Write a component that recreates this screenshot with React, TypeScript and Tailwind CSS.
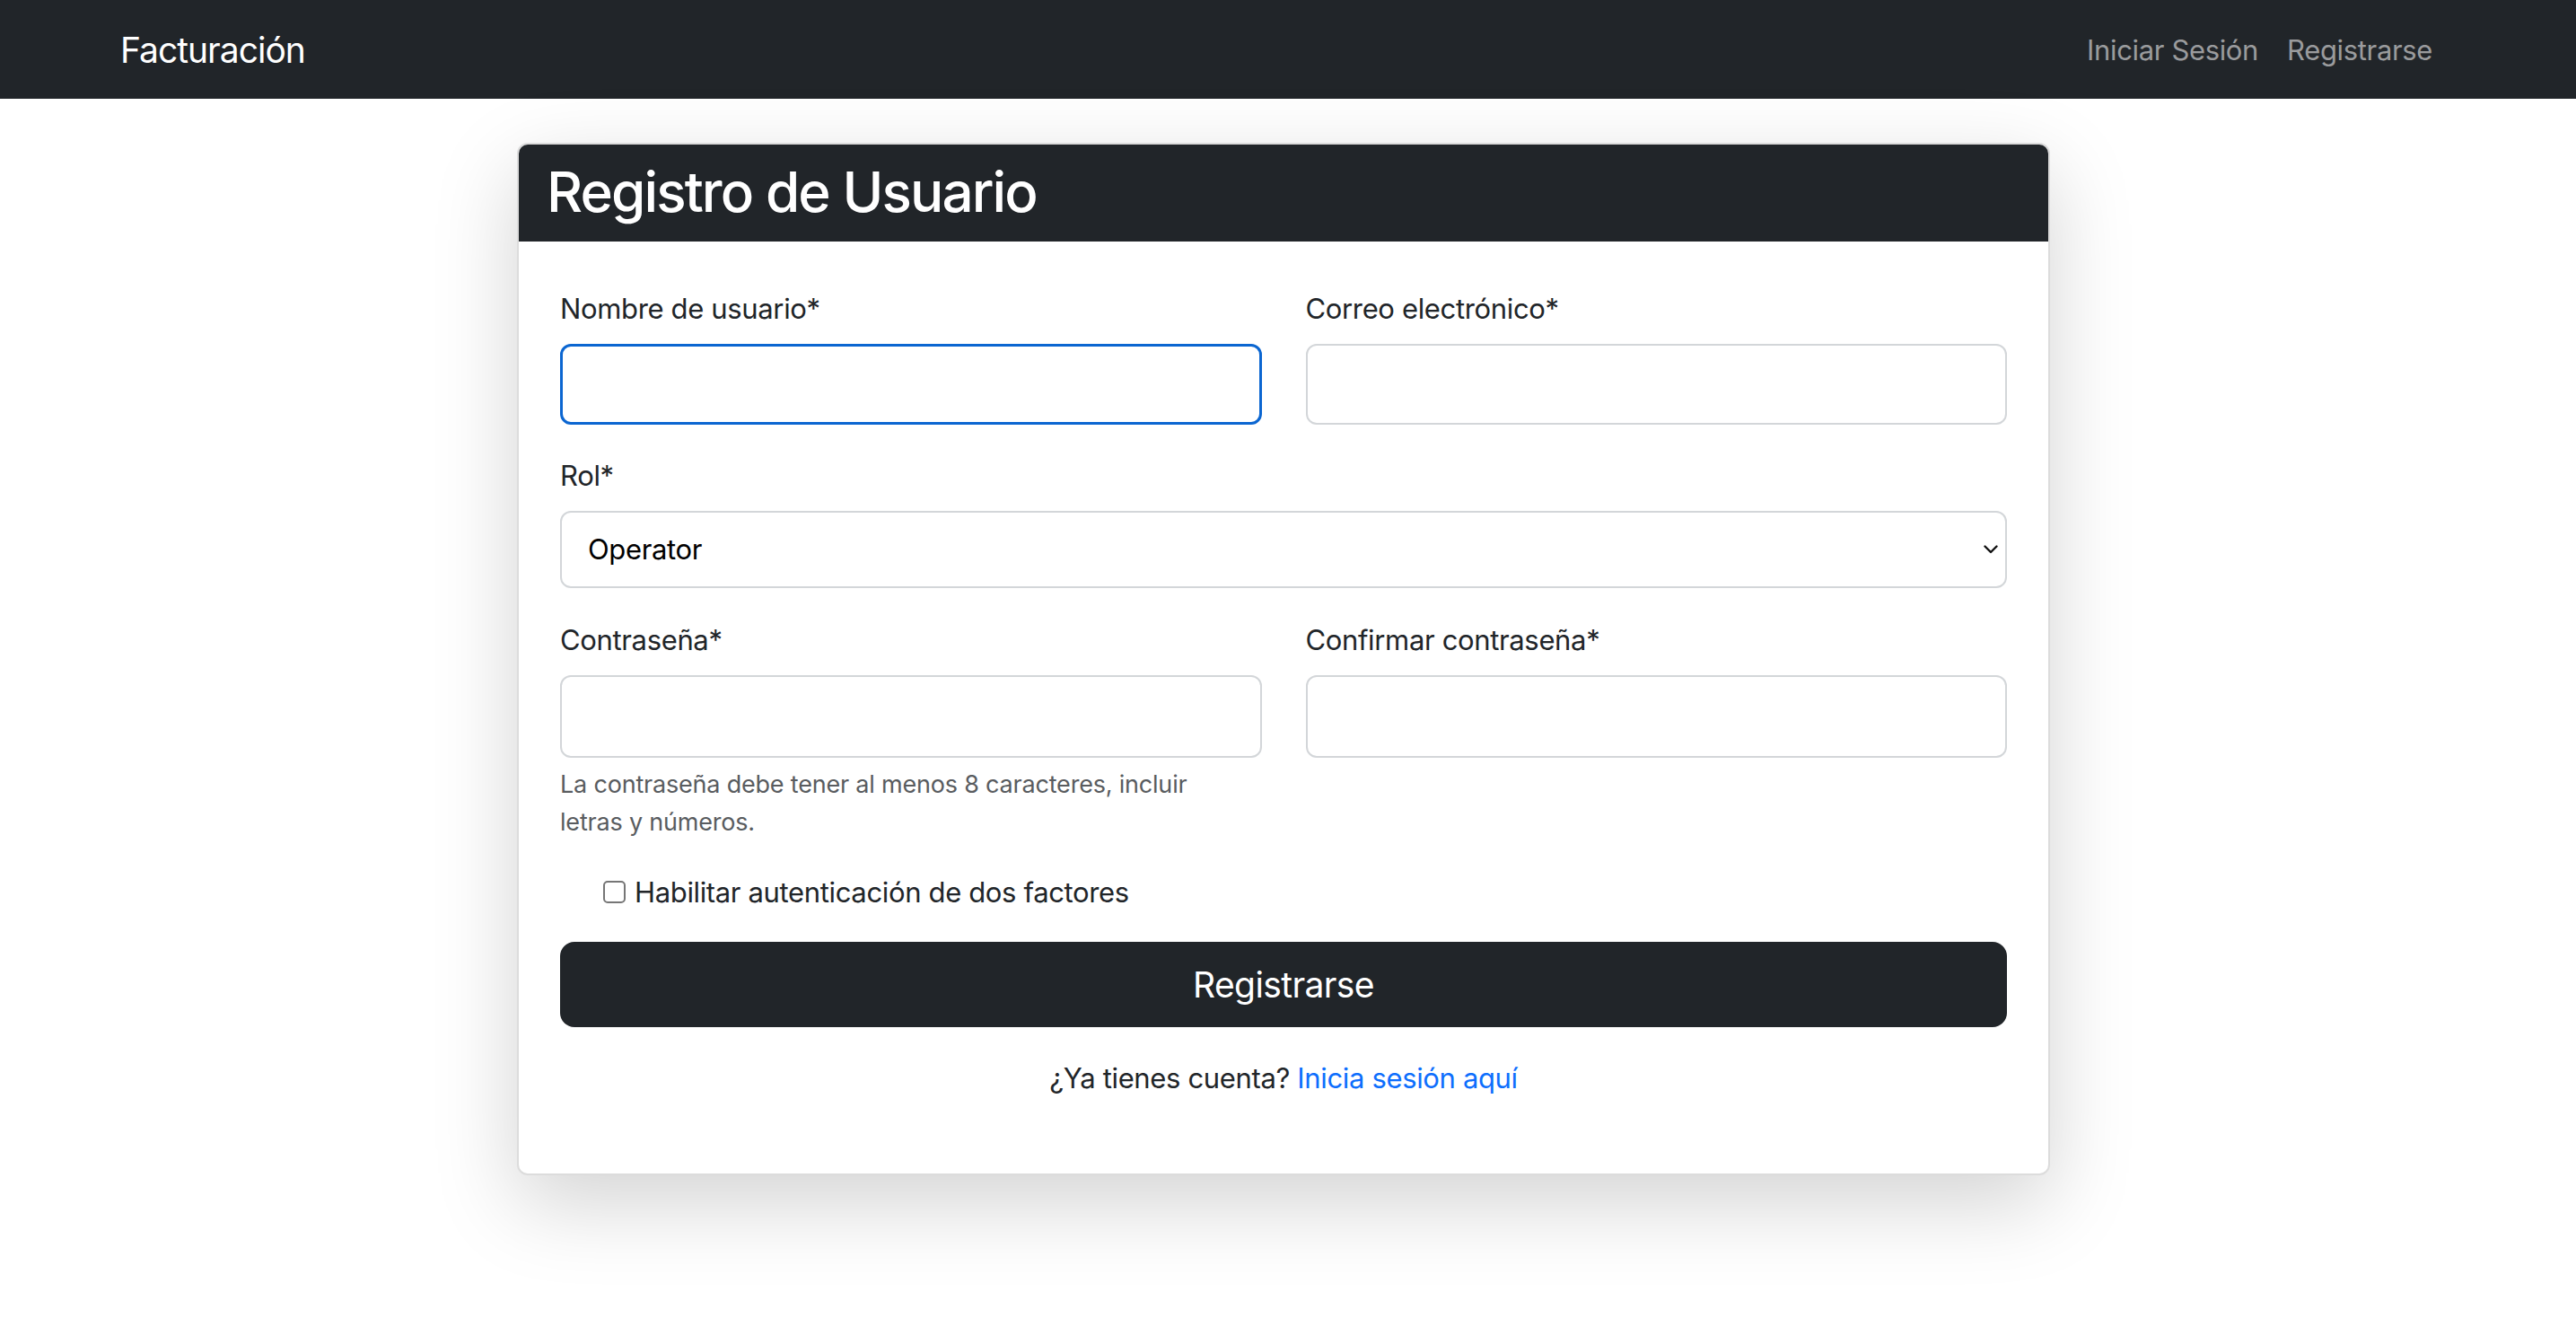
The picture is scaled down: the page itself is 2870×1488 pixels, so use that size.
import { useState } from "react";

export default function App() {
  const [username, setUsername] = useState("");
  const [email, setEmail] = useState("");
  const [role, setRole] = useState("Operator");
  const [password, setPassword] = useState("");
  const [confirm, setConfirm] = useState("");
  const [twoFactor, setTwoFactor] = useState(false);

  return (
    <div className="min-h-screen bg-white font-['Inter','Liberation_Sans',sans-serif] text-[#212529] tracking-[-0.35px]">
      {/* barra de navegación */}
      <nav className="h-[110px] bg-[#212529] flex items-center justify-between pl-[134px] pr-[160px]">
        <a href="#" className="text-white text-[39px] leading-none tracking-[-1px]">
          Facturación
        </a>
        <div className="flex items-center">
          <a href="#" className="px-[16px] text-[31px] text-[#9a9b9d] leading-none">
            Iniciar Sesión
          </a>
          <a href="#" className="pl-[16px] text-[31px] text-[#9a9b9d] leading-none">
            Registrarse
          </a>
        </div>
      </nav>

      {/* tarjeta de registro */}
      <div className="mt-[49px] ml-[576px] w-[1708px] rounded-[12px] border-2 border-[#dcdcdc] bg-white shadow-[0_31px_94px_rgba(0,0,0,0.175)] overflow-hidden">
        <div className="bg-[#212529] px-[31px] pt-[16px] pb-[18px]">
          <h2 className="text-white text-[62px] font-medium leading-[1.2] tracking-[-1.9px]">
            Registro de Usuario
          </h2>
        </div>

        <form
          className="px-[46px] pt-[51px] pb-[52px]"
          onSubmit={(e) => e.preventDefault()}
        >
          <div className="grid grid-cols-2 gap-x-[49px]">
            <div className="mb-[33px]">
              <label className="block mb-[16px] text-[31px] leading-[47px]">Nombre de usuario*</label>
              <input
                type="text"
                value={username}
                onChange={(e) => setUsername(e.target.value)}
                className="w-full h-[90px] rounded-[12px] border-[3px] border-[#0b66d1] px-[28px] text-[31px] outline-none"
              />
            </div>
            <div className="mb-[33px]">
              <label className="block mb-[16px] text-[31px] leading-[47px]">Correo electrónico*</label>
              <input
                type="email"
                value={email}
                onChange={(e) => setEmail(e.target.value)}
                className="w-full h-[90px] rounded-[12px] border-2 border-[#d3d6d9] px-[28px] text-[31px] outline-none"
              />
            </div>
          </div>

          <div className="mb-[34px]">
            <label className="block mb-[16px] text-[31px] leading-[47px]">Rol*</label>
            <div className="relative">
              <select
                value={role}
                onChange={(e) => setRole(e.target.value)}
                className="w-full h-[86px] appearance-none rounded-[12px] border-2 border-[#d3d6d9] bg-white pl-[29px] pr-[60px] text-[31px] text-black outline-none"
              >
                <option value="Operator">Operator</option>
                <option value="Admin">Admin</option>
              </select>
              <svg
                className="pointer-events-none absolute right-[10px] top-1/2 -translate-y-1/2"
                width="16"
                height="10"
                viewBox="0 0 16 10"
                fill="none"
              >
                <path d="M1.5 1.5 L8 8 L14.5 1.5" stroke="#111" strokeWidth="2.4" strokeLinecap="round" strokeLinejoin="round" />
              </svg>
            </div>
          </div>

          <div className="grid grid-cols-2 gap-x-[49px]">
            <div className="mb-[33px]">
              <label className="block mb-[16px] text-[31px] leading-[47px]">Contraseña*</label>
              <input
                type="password"
                value={password}
                onChange={(e) => setPassword(e.target.value)}
                className="w-full h-[92px] rounded-[12px] border-2 border-[#d3d6d9] px-[28px] text-[31px] outline-none"
              />
              <p className="mt-[9px] text-[27px] leading-[42px] text-[#595c5f] tracking-[-0.2px]">
                La contraseña debe tener al menos 8 caracteres, incluir
                <br />
                letras y números.
              </p>
            </div>
            <div className="mb-[33px]">
              <label className="block mb-[16px] text-[31px] leading-[47px]">Confirmar contraseña*</label>
              <input
                type="password"
                value={confirm}
                onChange={(e) => setConfirm(e.target.value)}
                className="w-full h-[92px] rounded-[12px] border-2 border-[#d3d6d9] px-[28px] text-[31px] outline-none"
              />
            </div>
          </div>

          <label className="flex items-center ml-[48px] mb-[32px] h-[47px] text-[31px] cursor-pointer">
            <input
              type="checkbox"
              checked={twoFactor}
              onChange={(e) => setTwoFactor(e.target.checked)}
              className="appearance-none w-[25px] h-[25px] mr-[10px] rounded-[5px] border-2 border-[#767676] bg-white checked:bg-[#0b66d1]"
            />
            Habilitar autenticación de dos factores
          </label>

          <button
            type="submit"
            className="w-full h-[95px] rounded-[16px] bg-[#212529] text-white text-[39px] leading-none tracking-[-0.6px]"
          >
            Registrarse
          </button>

          <p className="mt-[33px] mb-[31px] text-center text-[31px] leading-[47px]">
            ¿Ya tienes cuenta?{" "}
            <a href="#" className="text-[#0d6efd]">
              Inicia sesión aquí
            </a>
          </p>
        </form>
      </div>
    </div>
  );
}
